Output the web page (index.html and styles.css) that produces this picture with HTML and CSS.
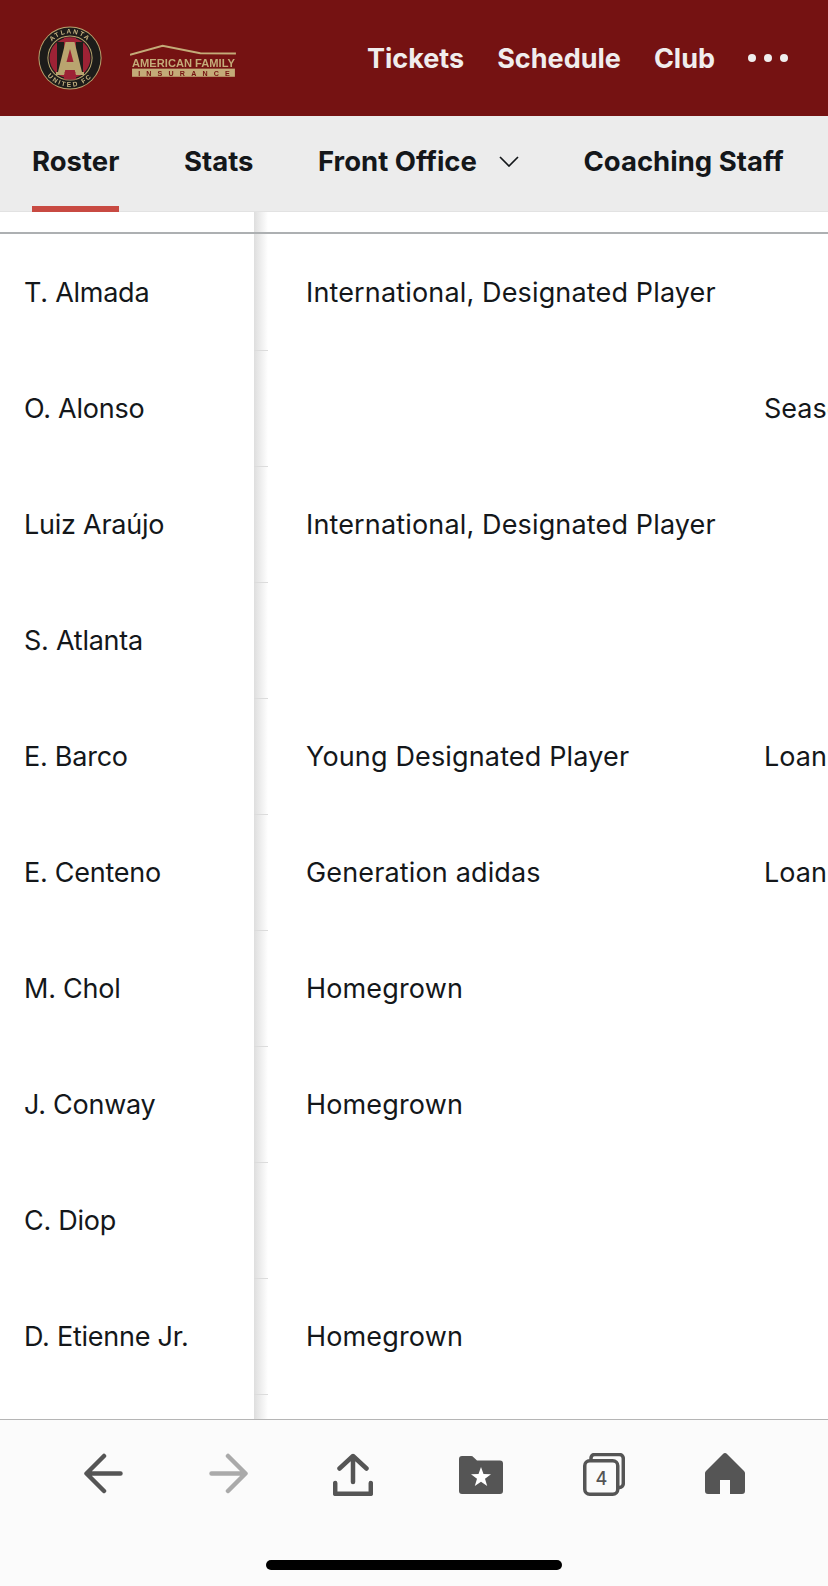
FILE: index.html
```html
<!DOCTYPE html>
<html lang="en">
<head>
<meta charset="utf-8">
<title>Roster</title>
<link rel="stylesheet" href="styles.css">
</head>
<body>
<div class="page">
  <header class="topbar">
    <div class="brand">
      <svg class="crest" viewBox="0 0 64 64" width="64" height="64" aria-label="Atlanta United FC">
        <circle cx="32" cy="32" r="31.6" fill="#b9a46f"/>
        <circle cx="32" cy="32" r="30.6" fill="#1d1c1a"/>
        <circle cx="32" cy="32" r="22.6" fill="#b9a46f"/>
        <circle cx="32" cy="32" r="21.6" fill="#1d1c1a"/>
        <circle cx="32" cy="32" r="20.4" fill="#9d2235"/>
        <rect x="19" y="16" width="8" height="32" fill="#1d1c1a"/>
        <rect x="37" y="16" width="8" height="32" fill="#1d1c1a"/>
        <rect x="26" y="11.500" width="12" height="42" fill="#9d2235"/>
        <path d="M27.500 16h9l7.500 30h2v3h-8l-1.500-5h-9L26 49h-8v-3h2z" fill="#b9a46f"/>
        <path d="M32 23l3.500 13h-7z" fill="#9d2235"/>
        <path d="M27.500 44h9l1 3h-11z" fill="#9d2235"/>
        <defs>
          <path id="arcTop" d="M7.500 32a24.500 24.500 0 0 1 49 0"/>
          <path id="arcBottom" d="M3.200 32a28.800 28.800 0 0 0 57.600 0"/>
        </defs>
        <text class="crest-text"><textPath href="#arcTop" startOffset="50%" text-anchor="middle">ATLANTA</textPath></text>
        <text class="crest-text wide"><textPath href="#arcBottom" startOffset="50%" text-anchor="middle">UNITED FC</textPath></text>
      </svg>
      <svg class="sponsor" viewBox="0 0 108 34" width="110" height="35" aria-label="American Family Insurance">
        <path d="M0 10.500 32 1.500 69 9l35 .2" fill="none" stroke="#c4ab78" stroke-width="2"/>
        <text class="sponsor-top" x="2" y="22" textLength="101" lengthAdjust="spacingAndGlyphs">AMERICAN FAMILY</text>
        <rect x="2" y="24" width="101" height="8" fill="#c4ab78"/>
        <text class="sponsor-bottom" x="8" y="31" textLength="90">INSURANCE</text>
      </svg>
    </div>
    <nav class="mainnav">
      <a>Tickets</a>
      <a>Schedule</a>
      <a>Club</a>
      <span class="dots"><i></i><i></i><i></i></span>
    </nav>
  </header>

  <nav class="subnav">
    <a class="tab active">Roster</a>
    <a class="tab">Stats</a>
    <a class="tab">Front Office
      <svg class="chevron" viewBox="0 0 20 11" width="20" height="11"><path d="M1 1l9 9 9-9" fill="none" stroke="#14171a" stroke-width="1.700"/></svg>
    </a>
    <a class="tab">Coaching Staff</a>
  </nav>

  <main class="table">
    <div class="row head"><div class="name"></div><div class="edge"></div></div>
    <div class="row"><div class="name">T. Almada</div><div class="edge"></div><div class="desig">International, Designated Player</div><div class="status"></div></div>
    <div class="row"><div class="name">O. Alonso</div><div class="edge"></div><div class="desig"></div><div class="status">Season-Ending Injury</div></div>
    <div class="row"><div class="name">Luiz Araújo</div><div class="edge"></div><div class="desig">International, Designated Player</div><div class="status"></div></div>
    <div class="row"><div class="name">S. Atlanta</div><div class="edge"></div><div class="desig"></div><div class="status"></div></div>
    <div class="row"><div class="name">E. Barco</div><div class="edge"></div><div class="desig">Young Designated Player</div><div class="status">Loan-In</div></div>
    <div class="row"><div class="name">E. Centeno</div><div class="edge"></div><div class="desig">Generation adidas</div><div class="status">Loan-In</div></div>
    <div class="row"><div class="name">M. Chol</div><div class="edge"></div><div class="desig">Homegrown</div><div class="status"></div></div>
    <div class="row"><div class="name">J. Conway</div><div class="edge"></div><div class="desig">Homegrown</div><div class="status"></div></div>
    <div class="row"><div class="name">C. Diop</div><div class="edge"></div><div class="desig"></div><div class="status"></div></div>
    <div class="row"><div class="name">D. Etienne Jr.</div><div class="edge"></div><div class="desig">Homegrown</div><div class="status"></div></div>
    <div class="row"><div class="name"></div><div class="edge"></div><div class="desig"></div><div class="status"></div></div>
  </main>

  <footer class="toolbar">
    <div class="tools">
      <svg viewBox="0 0 40 41" width="40" height="41"><path d="M37.500 20.500H4M21 3 3.500 20.500 21 38" fill="none" stroke="#555" stroke-width="4.500" stroke-linecap="round" stroke-linejoin="round"/></svg>
      <svg viewBox="0 0 40 41" width="40" height="41"><path d="M2.500 20.500H36M19 3l17.500 17.500L19 38" fill="none" stroke="#aaa" stroke-width="4.500" stroke-linecap="round" stroke-linejoin="round"/></svg>
      <svg viewBox="0 0 40 43" width="40" height="43"><path d="M20 29V4M6.500 15.500 20 3l13.500 12.500" fill="none" stroke="#555" stroke-width="4.500" stroke-linecap="round" stroke-linejoin="round"/><path d="M2.200 30v10.800h35.600V30" fill="none" stroke="#555" stroke-width="4.500" stroke-linecap="round" stroke-linejoin="round"/></svg>
      <svg viewBox="0 0 44 41" width="44" height="41"><path d="M0 6a3 3 0 0 1 3-3h9a3 3 0 0 1 2.500 1.200L18 7.500h23a3 3 0 0 1 3 3V38a3 3 0 0 1-3 3H3a3 3 0 0 1-3-3z" fill="#555"/><path d="M22 14l2.500 7.100 7.500.2-6 4.500 2.200 7.200-6.200-4.300-6.200 4.300 2.200-7.200-6-4.500 7.500-.2z" fill="#fff"/></svg>
      <svg viewBox="0 0 42 43" width="42" height="43"><path d="M8 6V5a3.500 3.500 0 0 1 3.500-3.500h25a4 4 0 0 1 3.800 4v25a4 4 0 0 1-3.800 4H36" fill="none" stroke="#555" stroke-width="3.500"/><rect x="1.750" y="7.750" width="33" height="33.500" rx="5" fill="#fbfbfb" stroke="#555" stroke-width="3.500"/><text class="tabcount" x="18.500" y="31.500" text-anchor="middle">4</text></svg>
      <svg viewBox="0 0 40 41" width="40" height="41"><path d="M20 0a3 3 0 0 1 2 1l17 17a3 3 0 0 1 1 2v18a3 3 0 0 1-3 3H25V27H15v14H3a3 3 0 0 1-3-3V20a3 3 0 0 1 1-2L18 1a3 3 0 0 1 2-1z" fill="#555"/></svg>
    </div>
    <div class="home-indicator"></div>
  </footer>
</div>
</body>
</html>
```
FILE: styles.css
```css
* { box-sizing: border-box; }
html, body { margin: 0; padding: 0; background: #fff; }
body { font-family: Inter, "Liberation Sans", sans-serif; color: #14171a; }
.page { width: 828px; height: 1586px; display: flex; flex-direction: column; overflow: hidden; }

.topbar { height: 116px; flex: none; background: #751212; display: flex; align-items: center; justify-content: space-between; padding: 0 40px 0 38px; }
.brand { display: flex; align-items: center; gap: 28px; }
.crest { filter: blur(0.3px); }
.sponsor { filter: blur(0.5px); margin-top: 6px; }
.crest-text { font: 700 6.500px "Liberation Sans", sans-serif; fill: #c9b583; letter-spacing: 1.6px; }
.crest-text.wide { letter-spacing: 1.9px; }
.sponsor-top { font: 700 10px "Liberation Sans", sans-serif; fill: #c4ab78; }
.sponsor-bottom { font: 700 7px "Liberation Sans", sans-serif; fill: #751212; }
.mainnav { display: flex; align-items: center; gap: 33px; color: #f0eded; font-size: 27px; font-weight: 700; }
.dots { display: flex; gap: 8px; }
.dots i { width: 8px; height: 8px; border-radius: 50%; background: #f0eded; }

.subnav { height: 96px; flex: none; background: #ececec; display: flex; align-items: stretch; padding: 0 32px; gap: 64.6px; font-size: 27.5px; font-weight: 700; box-shadow: inset 0 -1px 0 #e2e2e2; }
.tab { display: flex; align-items: center; gap: 22px; border-bottom: 6px solid transparent; white-space: nowrap; }
.tab.active { border-bottom-color: #c84a42; }
.chevron { flex: none; }

.table { height: 1207px; flex: none; overflow: hidden; background: #fff; }
.row { display: grid; grid-template-columns: 254px 14px 496px 1fr; height: 116px; align-items: stretch; font-size: 27px; font-weight: 400; }
.row.head { height: 22px; border-bottom: 2px solid #adb0b2; }
.name { padding-left: 24px; display: flex; align-items: center; white-space: nowrap; letter-spacing: -0.25px; }
.edge { background: linear-gradient(90deg, #dedede, #fff); }
.row + .row + .row .edge { border-top: 1px solid #dcdcdc; }
.desig { padding-left: 38px; display: flex; align-items: center; white-space: nowrap; letter-spacing: 0.15px; }
.status { display: flex; align-items: center; white-space: nowrap; overflow: hidden; }

.toolbar { flex: 1; background: #fbfbfb; border-top: 1px solid #b5b5b5; display: flex; flex-direction: column; align-items: center; }
.tools { width: 100%; display: grid; grid-template-columns: 126px 124px 126px 124px 122px 40px; align-items: start; height: 43px; margin-top: 33px; padding-left: 83px; }
.tools svg { display: block; }
.tabcount { font: 500 18px Inter, "Liberation Sans", sans-serif; fill: #555; }
.home-indicator { width: 296px; height: 10px; border-radius: 5px; background: #000; margin-top: 64px; }
```
